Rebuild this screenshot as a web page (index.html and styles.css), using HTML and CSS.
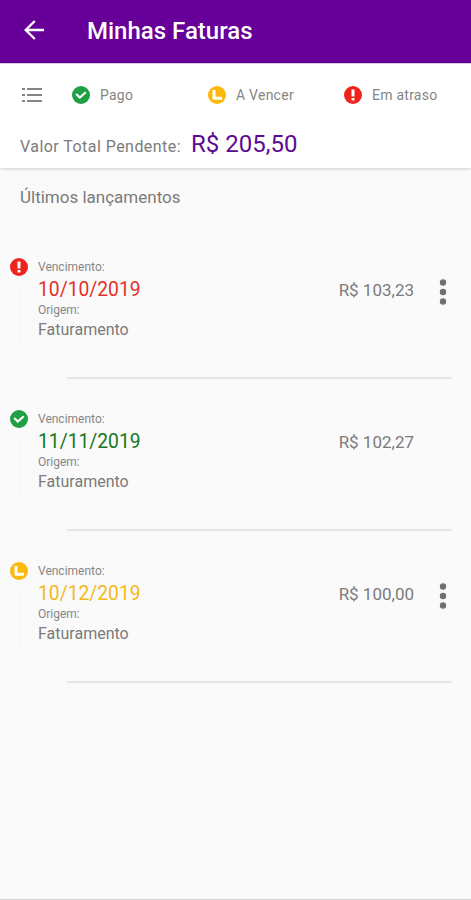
FILE: index.html
```html
<!DOCTYPE html>
<html lang="pt-BR">
<head>
  <meta charset="UTF-8" />
  <meta name="viewport" content="width=device-width, initial-scale=1" />
  <title>Minhas Faturas</title>
  <link rel="stylesheet" href="styles.css">
</head>
<body>
  <!-- shared icons -->
  <svg class="sprite" width="0" height="0">
    <symbol id="paid" viewBox="0 0 18 18">
      <circle cx="9" cy="9" r="9" fill="#1fa045" />
      <path d="M4.2 8l3.6 3.5 6-5.2" fill="none" stroke="#fff" stroke-width="2.1" />
    </symbol>
    <symbol id="due" viewBox="0 0 18 18">
      <circle cx="9" cy="9" r="9" fill="#fcb90b" />
      <path d="M6 4v8.2h8" fill="none" stroke="#fff" stroke-width="3" stroke-linejoin="round" />
    </symbol>
    <symbol id="late" viewBox="0 0 18 18">
      <circle cx="9" cy="9" r="9" fill="#f0231a" />
      <path d="M9 3.4v7.2M9 12v2.6" fill="none" stroke="#fff" stroke-width="3" />
    </symbol>
    <symbol id="more" viewBox="0 0 8 28">
      <circle cx="4" cy="4.5" r="3.2" />
      <circle cx="4" cy="14" r="3.2" />
      <circle cx="4" cy="23.5" r="3.2" />
    </symbol>
  </svg>

  <header class="topbar">
    <svg class="back" viewBox="0 0 20 20">
      <path d="M10.8 1L1.7 10l9.1 9M1.7 10H20" fill="none" stroke="#fff" stroke-width="2.4" />
    </svg>
    <h1>Minhas Faturas</h1>
  </header>

  <section class="summary">
    <div class="legend">
      <svg class="list-icon" viewBox="0 0 20 16">
        <path d="M0 2h3M0 8h3M0 14h3M5 2h15M5 8h15M5 14h15" stroke="#858585" stroke-width="2" />
      </svg>
      <div class="legend-item"><svg class="status"><use href="#paid" /></svg><span>Pago</span></div>
      <div class="legend-item"><svg class="status"><use href="#due" /></svg><span>A Vencer</span></div>
      <div class="legend-item"><svg class="status"><use href="#late" /></svg><span>Em atraso</span></div>
    </div>
    <div class="total">
      <span class="total-label">Valor Total Pendente:</span>
      <span class="total-value">R$ 205,50</span>
    </div>
  </section>

  <main>
    <h2>Últimos lançamentos</h2>

    <article class="invoice late">
      <div class="timeline"><svg class="status"><use href="#late" /></svg></div>
      <div class="info">
        <span class="label">Vencimento:</span>
        <span class="date">10/10/2019</span>
        <span class="label">Origem:</span>
        <span class="origin">Faturamento</span>
      </div>
      <span class="amount">R$ 103,23</span>
      <div class="menu"><svg class="more"><use href="#more" /></svg></div>
    </article>

    <article class="invoice paid">
      <div class="timeline"><svg class="status"><use href="#paid" /></svg></div>
      <div class="info">
        <span class="label">Vencimento:</span>
        <span class="date">11/11/2019</span>
        <span class="label">Origem:</span>
        <span class="origin">Faturamento</span>
      </div>
      <span class="amount">R$ 102,27</span>
      <div class="menu"></div>
    </article>

    <article class="invoice due">
      <div class="timeline"><svg class="status"><use href="#due" /></svg></div>
      <div class="info">
        <span class="label">Vencimento:</span>
        <span class="date">10/12/2019</span>
        <span class="label">Origem:</span>
        <span class="origin">Faturamento</span>
      </div>
      <span class="amount">R$ 100,00</span>
      <div class="menu"><svg class="more"><use href="#more" /></svg></div>
    </article>
  </main>
</body>
</html>
```

FILE: styles.css
```css
* {
  margin: 0;
  padding: 0;
  box-sizing: border-box;
}

body {
  font-family: Roboto, sans-serif;
  background: #fafafa;
  color: #7b7b7b;
  height: 100vh;
  border-bottom: 1px solid #d6d6d6;
  display: flex;
  flex-direction: column;
}

svg {
  display: block;
  flex-shrink: 0;
}

.sprite {
  position: absolute;
}

.topbar {
  height: 63px;
  background: #660099;
  display: flex;
  align-items: center;
  padding-left: 24px;
}

.back {
  width: 20px;
  height: 20px;
  margin-top: -3px;
}

h1 {
  font-size: 24px;
  font-weight: 500;
  color: #fff;
  margin: -1px 0 0 43px;
}

.summary {
  height: 105px;
  background: #fff;
  border-top: 1px solid #d9cce0;
  box-shadow: 0 1px 3px rgba(0, 0, 0, 0.18);
}

.legend {
  display: grid;
  grid-template-columns: 50px 136px 136px 1fr;
  align-items: center;
  height: 61px;
  padding-left: 22px;
}

.list-icon {
  width: 20px;
  height: 16px;
}

.legend-item {
  display: flex;
  align-items: center;
  gap: 10px;
  font-size: 14px;
  letter-spacing: 0.25px;
  color: #858585;
}

.status {
  width: 18px;
  height: 18px;
}

.total {
  display: flex;
  align-items: baseline;
  gap: 10px;
  padding-left: 20px;
  margin-top: 5px;
}

.total-label {
  font-size: 16px;
  letter-spacing: 0.45px;
}

.total-value {
  font-size: 24px;
  color: #5c0a94;
}

h2 {
  font-size: 17px;
  font-weight: 400;
  line-height: 20px;
  padding: 19px 0 20px 20px;
}

.invoice {
  display: flex;
  height: 152px;
  padding: 31px 0 0 10px;
  /* divider starts after the timeline */
  background: linear-gradient(#e6e6e6, #e6e6e6) no-repeat 67px 100% / 385px 2px;
}

.timeline {
  width: 18px;
  display: flex;
  flex-direction: column;
  align-items: center;
}

.timeline::after {
  content: "";
  width: 1px;
  height: 58px;
  margin-top: 11px;
  background: #f2f2f2;
}

.info {
  display: flex;
  flex-direction: column;
  margin-left: 10px;
}

.label {
  font-size: 12px;
  line-height: 17px;
  color: #858585;
}

.label:first-child {
  line-height: 19px;
}

.date {
  font-size: 19.3px;
  line-height: 25px;
}

.origin {
  font-size: 16px;
  line-height: 21px;
}

.late .date {
  color: #e2312a;
}

.paid .date {
  color: #16771f;
}

.due .date {
  color: #f6b91c;
}

.amount {
  font-size: 17px;
  line-height: 20px;
  margin: 22px 0 0 auto;
}

.menu {
  width: 57px;
  padding: 20px 0 0 25px;
}

.more {
  width: 8px;
  height: 28px;
  fill: #707070;
}
```
